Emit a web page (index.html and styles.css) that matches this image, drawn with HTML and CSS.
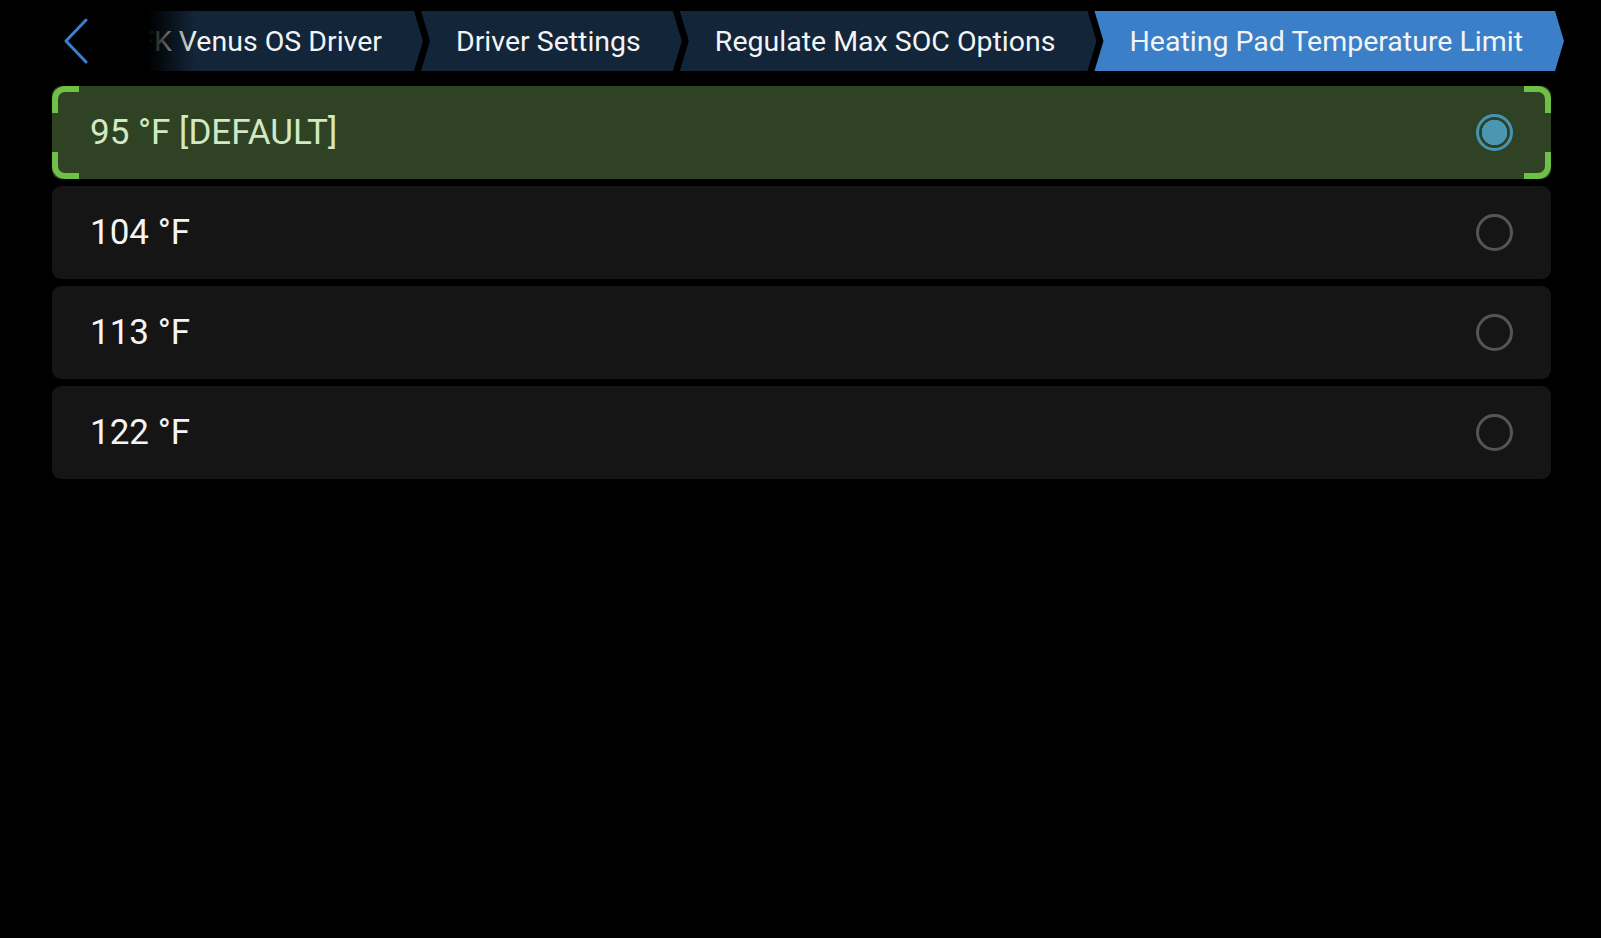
FILE: index.html
```html
<!DOCTYPE html>
<html lang="en">

<head>
    <meta charset="UTF-8">
    <meta name="viewport" content="width=device-width, initial-scale=1.0">
    <title>Heating Pad Temperature Limit</title>
    <link rel="stylesheet" href="styles.css">
</head>

<body>
    <div class="header">
        <button class="back" aria-label="Back">
            <svg width="26" height="46" viewBox="0 0 26 46">
                <polyline points="23,2 3,23 23,44" fill="none" stroke="#3a80d0" stroke-width="3" stroke-linecap="round" stroke-linejoin="round" />
            </svg>
        </button>
        <div class="crumbs">
            <div class="crumb">JKBMS FK Venus OS Driver</div>
            <div class="crumb">Driver Settings</div>
            <div class="crumb">Regulate Max SOC Options</div>
            <div class="crumb active">Heating Pad Temperature Limit</div>
        </div>
    </div>

    <div class="list">
        <div class="option selected">
            <span class="label">95 °F [DEFAULT]</span>
            <span class="radio"></span>
            <div class="focus">
                <span class="corner tl"></span>
                <span class="corner tr"></span>
                <span class="corner bl"></span>
                <span class="corner br"></span>
            </div>
        </div>
        <div class="option">
            <span class="label">104 °F</span>
            <span class="radio"></span>
        </div>
        <div class="option">
            <span class="label">113 °F</span>
            <span class="radio"></span>
        </div>
        <div class="option">
            <span class="label">122 °F</span>
            <span class="radio"></span>
        </div>
    </div>
</body>

</html>
```

FILE: styles.css
```css
body {
    margin: 0;
    background-color: #000;
    font-family: Roboto, "Liberation Sans", sans-serif;
    color: #fff;
}

.header {
    display: flex;
    align-items: center;
    height: 60px;
    margin-top: 11px;
    padding-left: 63px;
}

.back {
    background: none;
    border: none;
    padding: 0;
    width: 26px;
    height: 46px;
    cursor: pointer;
}

.back svg {
    display: block;
}

.crumbs {
    position: relative;
    flex: 1;
    display: flex;
    justify-content: flex-end;
    height: 60px;
    margin-left: 51px;
    padding-right: 37px;
    overflow: hidden;
}

.crumbs::before {
    content: "";
    position: absolute;
    left: 0;
    top: 0;
    bottom: 0;
    width: 55px;
    background: linear-gradient(to right, #000 15%, rgba(0, 0, 0, 0));
    z-index: 1;
}

.crumb {
    flex-shrink: 0;
    display: flex;
    align-items: center;
    height: 60px;
    padding: 0 41px 0 35px;
    margin-left: -2px;
    background-color: #132539;
    font-size: 28.5px;
    color: #f2f4f6;
    white-space: nowrap;
    clip-path: polygon(0 0, calc(100% - 9px) 0, 100% 50%, calc(100% - 9px) 100%, 0 100%, 9px 50%);
}

.crumb.active {
    background-color: #3a7fc8;
}

.list {
    display: flex;
    flex-direction: column;
    gap: 7px;
    margin: 15px 50px 0 52px;
}

.option {
    position: relative;
    display: flex;
    align-items: center;
    justify-content: space-between;
    height: 93px;
    padding: 0 38px 0 38px;
    background-color: #151515;
    border-radius: 9px;
}

.option .label {
    font-size: 35px;
    color: #f4f4f4;
}

.radio {
    box-sizing: border-box;
    width: 37px;
    height: 37px;
    border: 3px solid #555;
    border-radius: 50%;
}

.option.selected {
    background-color: #2f4224;
}

.option.selected .label {
    color: #d2e9c3;
}

.option.selected .radio {
    border-color: #4793b4;
    background: radial-gradient(circle, #4b97b3 0 12.5px, transparent 13px);
}

.focus {
    position: absolute;
    inset: 0;
    pointer-events: none;
}

.corner {
    position: absolute;
    width: 21px;
    height: 21px;
    border: 0 solid #6fc046;
}

.corner.tl {
    left: 0;
    top: 0;
    border-top-width: 6px;
    border-left-width: 6px;
    border-top-left-radius: 13px;
}

.corner.tr {
    right: 0;
    top: 0;
    border-top-width: 6px;
    border-right-width: 6px;
    border-top-right-radius: 13px;
}

.corner.bl {
    left: 0;
    bottom: 0;
    border-bottom-width: 6px;
    border-left-width: 6px;
    border-bottom-left-radius: 13px;
}

.corner.br {
    right: 0;
    bottom: 0;
    border-bottom-width: 6px;
    border-right-width: 6px;
    border-bottom-right-radius: 13px;
}
```
